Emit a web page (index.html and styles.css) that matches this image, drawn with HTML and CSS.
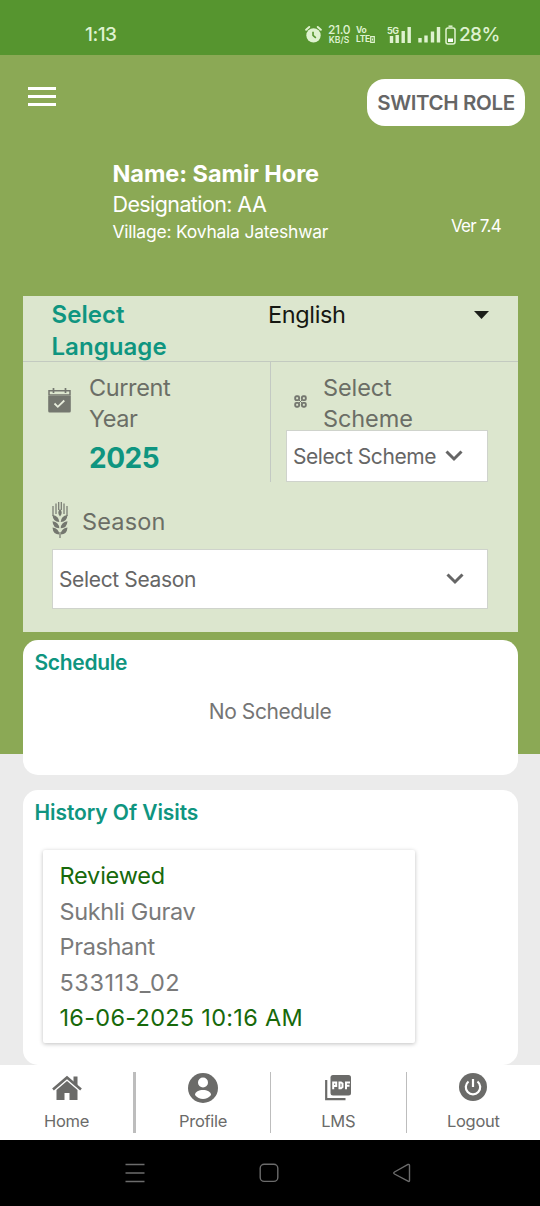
FILE: index.html
```html
<!DOCTYPE html>
<html lang="en">
<head>
<meta charset="utf-8">
<title>Dashboard</title>
<link rel="stylesheet" href="styles.css">
</head>
<body>
<div class="screen">
  <div class="status">
    <span class="clock">1:13</span>
    <div class="status-icons">
      <svg class="alarm" width="17" height="19" viewBox="0 0 18 19"><circle cx="9" cy="10.5" r="7.6" fill="#dff2d0"/><path d="M1.200 4.500 4.500 1.500M16.800 4.500 13.500 1.500" stroke="#dff2d0" stroke-width="2" stroke-linecap="round"/><path d="M8.500 6.500V10.500L11.500 13" stroke="#56952f" stroke-width="1.700" fill="none"/></svg>
      <div class="speed"><span class="rate">21.0</span><span class="unit">KB/S</span></div>
      <div class="volte"><span>Vo</span><span>LTE<svg width="5" height="7" viewBox="0 0 5 7"><path d="M.7.700H4.300V6.300H.7ZM2.500 2.500V4.500" stroke="#dff2d0" stroke-width="1.200" fill="none"/></svg></span></div>
      <svg class="signal5" width="25" height="18" viewBox="0 0 25 18"><text x="0" y="7.500" class="g5">5G</text><path d="M4.500 10V17M10.200 9V17M16.200 5V17M22.200 1V17" stroke="#dff2d0" stroke-width="3.400"/></svg>
      <svg class="signal" width="23" height="17" viewBox="0 0 23 17"><path d="M2 12V16.500M8 9.500V16.500M14.500 5.500V16.500M20.500 1V16.500" stroke="#dff2d0" stroke-width="3.400"/></svg>
      <svg class="battery" width="11" height="20" viewBox="0 0 11 20"><rect x="1" y="3" width="9" height="16" rx="2" fill="none" stroke="#dff2d0" stroke-width="1.500"/><path d="M3.500 1.200H7.500" stroke="#dff2d0" stroke-width="1.500"/><path d="M3 13.500H8V17H3Z" fill="#fff"/></svg>
      <span class="percent">28%</span>
    </div>
  </div>

  <main class="main">
    <header class="top">
      <svg class="menu" width="28" height="20" viewBox="0 0 28 20"><path d="M0 1.500H28M0 9.500H28M0 17.500H28" stroke="#fff" stroke-width="3"/></svg>
      <button class="switch"><span>SWITCH ROLE</span></button>
    </header>
    <section class="identity">
      <div class="who">
        <div class="name"><span>Name: Samir Hore</span></div>
        <div class="designation"><span>Designation: AA</span></div>
        <div class="village"><span>Village: Kovhala Jateshwar</span></div>
      </div>
      <div class="version"><span>Ver 7.4</span></div>
    </section>

    <section class="filters">
      <div class="language">
        <div class="language-label">Select<br>Language</div>
        <div class="language-value">English</div>
        <svg class="caret" width="15" height="8" viewBox="0 0 15 8"><path d="M0 0H15L7.500 8Z" fill="#1c1f1a"/></svg>
      </div>
      <div class="pair">
        <div class="year">
          <svg class="calendar" width="23" height="25" viewBox="0 0 23 25"><path d="M1 2.800H22V7H1Z" fill="#dce6ce" stroke="#74776f" stroke-width="1.500"/><path d="M.2 8H22.800V23Q22.800 24.500 21.300 24.500H1.700Q.2 24.500.2 23Z" fill="#74776f"/><path d="M5.500 0V5M17.500 0V5" stroke="#74776f" stroke-width="1.700"/><path d="M6.500 15.500 9.800 18.800 16.300 12.500" fill="none" stroke="#e7eddc" stroke-width="1.800"/></svg>
          <div class="year-text"><div class="label">Current<br>Year</div><div class="year-value">2025</div></div>
        </div>
        <div class="scheme">
          <div class="scheme-head">
            <svg class="dots" width="13" height="13" viewBox="0 0 13 13"><g fill="none" stroke="#74776f" stroke-width="1.900"><rect x="1.200" y="1.200" width="3.900" height="3.900" rx="1.200"/><rect x="7.900" y="1.200" width="3.900" height="3.900" rx="1.200"/><rect x="1.200" y="7.900" width="3.900" height="3.900" rx="1.200"/><rect x="7.900" y="7.900" width="3.900" height="3.900" rx="1.200"/></g><path d="M5 5 8 8M8 5 5 8" stroke="#74776f"/></svg>
            <div class="label scheme-label">Select<br>Scheme</div>
          </div>
          <div class="select select-scheme"><span>Select Scheme</span><svg width="18" height="12" viewBox="0 0 18 12"><path d="M1.500 1.500 9 9 16.500 1.500" fill="none" stroke="#666" stroke-width="3"/></svg></div>
        </div>
      </div>
      <div class="season-head">
        <svg class="wheat" width="16" height="36" viewBox="0 0 16 36"><g stroke="#74776f" stroke-width="1.200"><path d="M1 4V14M4 1.500V12M6.700 0V8M9.300 0V8M12 1.500V12M15 4V14M8 30V36"/></g><g fill="#74776f"><path d="M8 7Q11.500 10.500 8 14.500 4.500 10.500 8 7Z"/><path id="leaf" d="M.5 13Q7 14 7.300 20 1 20 .5 13ZM15.500 13Q9 14 8.700 20 15 20 15.500 13Z"/><use href="#leaf" y="6.300"/><use href="#leaf" y="12.600"/></g></svg>
        <span class="label">Season</span>
      </div>
      <div class="select select-season"><span>Select Season</span><svg width="18" height="12" viewBox="0 0 18 12"><path d="M1.500 1.500 9 9 16.500 1.500" fill="none" stroke="#666" stroke-width="3"/></svg></div>
    </section>

    <section class="card schedule">
      <h2><span>Schedule</span></h2>
      <p class="empty"><span>No Schedule</span></p>
    </section>

    <section class="card history">
      <h2 class="history-title"><span>History Of Visits</span></h2>
      <div class="visit">
        <div class="green reviewed">Reviewed</div>
        <div class="place">Sukhli Gurav</div>
        <div class="person">Prashant</div>
        <div class="code">533113_02</div>
        <div class="green date">16-06-2025 10:16 AM</div>
      </div>
    </section>
  </main>

  <nav class="tabs">
    <div class="tab">
      <svg width="30" height="30" viewBox="0 0 30 30"><path d="M1 16.500 15 4.500 29 16.500" fill="none" stroke="#6b6b69" stroke-width="2.600"/><path d="M21.500 3.500H25.500V13L21.500 9.500Z" fill="#6b6b69"/><path d="M4.500 17 15 8 25.500 17V27H17.500V20H12.500V27H4.500Z" fill="#6b6b69"/></svg>
      <span>Home</span>
    </div>
    <div class="tab">
      <svg width="30" height="30" viewBox="0 0 30 30"><circle cx="15" cy="15" r="15" fill="#6b6b69"/><circle cx="15" cy="9.500" r="5" fill="#fff"/><path d="M7 22C7 18.500 11 17 15 17S23 18.500 23 22C21 24.500 18 26 15 26S9 24.500 7 22Z" fill="#fff"/></svg>
      <span>Profile</span>
    </div>
    <div class="tab">
      <svg width="26" height="26" viewBox="0 0 26 26"><rect x="5.500" y="0" width="20.500" height="20.500" rx="2.500" fill="#6b6b69"/><path d="M1.200 5V24.200H20.500" stroke="#6b6b69" stroke-width="2.200" fill="none"/><path d="M8.200 14.200V7.500H11.200V11H8.200M14.500 7.500V13.200H16L17.500 12V8.500L16 7.500ZM21 14.200V7.500H25M21 10.800H24.500" stroke="#fff" stroke-width="2" fill="none"/></svg>
      <span>LMS</span>
    </div>
    <div class="tab">
      <svg width="28" height="28" viewBox="0 0 28 28"><circle cx="14" cy="14" r="14" fill="#6b6b69"/><path d="M14 6V14M9.500 8.500A7.200 7.200 0 1 0 18.500 8.500" stroke="#fff" stroke-width="2.200" fill="none"/></svg>
      <span>Logout</span>
    </div>
  </nav>

  <div class="system">
    <svg width="20" height="20" viewBox="0 0 20 20"><path d="M.5 1.500H19.500M.5 10H19.500M.5 18.500H19.500" stroke="#6c6c6c" stroke-width="1.400"/></svg>
    <svg width="20" height="20" viewBox="0 0 20 20"><rect x="1.200" y="1.200" width="17.600" height="17.200" rx="4" fill="none" stroke="#6c6c6c" stroke-width="1.400"/></svg>
    <svg width="20" height="20" viewBox="0 0 20 20"><path d="M16 1.500Q17.500 1 17.500 2.500V17.500Q17.500 19 16 18.200L2.500 11Q1 10 2.500 9Z" fill="none" stroke="#6c6c6c" stroke-width="1.400"/></svg>
  </div>
</div>
</body>
</html>
```
FILE: styles.css
```css
* { box-sizing: border-box; }
body { margin: 0; font-family: Inter, "Liberation Sans", sans-serif; }
h2, p { margin: 0; }
svg { display: block; flex: none; }
.screen { width: 540px; height: 1206px; display: flex; flex-direction: column; overflow: hidden; white-space: nowrap; }

.status { height: 55px; flex: none; background: #56952f; color: #dff2d0; display: flex; justify-content: space-between; align-items: center; padding: 14px 42px 0 85px; }
.clock { font-size: 19px; letter-spacing: -.5px; font-weight: 500; }
.status-icons { display: flex; align-items: center; height: 24px; }
.speed { display: flex; flex-direction: column; align-items: center; width: 24px; margin-left: 5px; font-weight: 500; }
.rate { font-size: 12px; line-height: 12px; letter-spacing: -.3px; }
.unit { font-size: 8.500px; line-height: 9px; font-weight: 600; }
.volte { display: flex; flex-direction: column; margin-left: 5px; width: 20px; font-size: 8.500px; line-height: 9px; font-weight: 700; letter-spacing: -.4px; }
.volte span { display: flex; align-items: center; }
.signal5 { margin-left: 11px; }
.g5 { font: 700 9px Inter, sans-serif; fill: #dff2d0; letter-spacing: -.5px; }
.signal { margin-left: 6px; }
.battery { margin-left: 4px; }
.percent { font-size: 19px; margin-left: 3px; width: 39px; letter-spacing: -.6px; font-weight: 500; }

.main { height: 1010px; flex: none; padding: 0 22.500px; background: linear-gradient(#8ba955 0 699px, #ebebeb 699px); }
.top { height: 105px; display: flex; justify-content: space-between; padding: 24px 0 0 5.500px; margin-right: -7.500px; }
.menu { margin-top: 8px; }
.switch { width: 158px; height: 47px; padding: 0; border: 0; border-radius: 18px; background: #fff; color: #666; font: 600 20.500px Inter, sans-serif; letter-spacing: -.35px; }
.identity { height: 136px; display: flex; justify-content: space-between; padding: 0 16.500px 0 90px; color: #fff; }
.name { font-size: 23.500px; font-weight: 700; line-height: 28px; letter-spacing: -.05px; }
.designation { font-size: 21.500px; line-height: 33px; letter-spacing: -.6px; }
.village { font-size: 17.500px; line-height: 21px; letter-spacing: -.23px; }
.version { font-size: 17px; line-height: 20px; padding-top: 56px; letter-spacing: -.75px; }

.filters { height: 336px; background: #dce6ce; color: #6b6e66; }
.language { height: 66px; border-bottom: 1px solid #c3cac0; display: flex; padding: 3px 28.500px 0 29px; line-height: 32px; font-size: 23.500px; }
.language-label { width: 216.500px; color: #0f9580; font-weight: 600; font-size: 24px; letter-spacing: .05px; }
.language-value { flex: 1; color: #151712; letter-spacing: -.35px; }
.caret { margin-top: 12px; }
.pair { height: 136px; display: flex; }
.label { font-size: 23.500px; line-height: 31.500px; letter-spacing: -.4px; }
.year { width: 248px; height: 120px; border-right: 1px solid #c3c9c3; display: flex; padding-left: 25.500px; }
.calendar { margin: 26px 18px 0 0; }
.year-text { padding-top: 9.500px; }
.year-value { color: #0f9580; font-weight: 700; font-size: 28px; line-height: 46px; letter-spacing: -.5px; }
.scheme { padding-left: 15.500px; }
.scheme-head { display: flex; height: 68px; padding: 9.500px 0 0 8px; }
.scheme-label { letter-spacing: -.1px; }
.dots { margin: 23px 16px 0 0; }
.select { background: #fff; border: 1px solid #cfd3cc; color: #666; font-size: 21px; display: flex; align-items: center; letter-spacing: -.35px; }
.select-scheme { width: 202px; height: 52px; padding-left: 6px; letter-spacing: -.43px; }
.select-scheme svg { margin-left: 9px; }
.season-head { display: flex; align-items: center; height: 46px; padding-left: 29.500px; margin-bottom: 5px; }
.wheat { margin-top: -2px; }
.season-head .label { margin: 2px 0 0 14px; letter-spacing: .15px; }
.select-season { width: 436px; height: 60px; margin-left: 29.500px; padding: 0 23.500px 0 6px; justify-content: space-between; }

.card { background: #fff; border-radius: 15px; }
.card h2 { color: #0f9580; font-size: 21px; font-weight: 600; line-height: 27px; letter-spacing: -.3px; }
.card .history-title { letter-spacing: -.08px; }
.schedule { height: 135px; margin-top: 8px; padding: 9px 12px; }
.empty { margin-top: 23px; text-align: center; color: #757575; font-size: 21px; line-height: 26px; letter-spacing: -.42px; }
.history { height: 275px; margin-top: 15px; padding: 9px 12px; }
.visit { width: 372px; height: 193px; margin: 24px 0 0 8px; padding: 8px 17px; border-radius: 2px; box-shadow: 0 1px 4px rgba(0,0,0,.25); color: #7a7a7a; font-size: 23.500px; line-height: 35.500px; letter-spacing: -.2px; }
.place, .person { letter-spacing: -.35px; }
.visit .code { letter-spacing: .55px; }
.visit .date { letter-spacing: .28px; }
.green { color: #17690b; }

.tabs { height: 75px; flex: none; display: grid; grid-template-columns: 136px 135px 135.500px 133.500px; background: #fff; }
.tab { height: 61px; margin-top: 7px; padding-bottom: 1px; display: flex; flex-direction: column; align-items: center; justify-content: space-between; color: #6b6b69; font-size: 16.500px; line-height: 21px; letter-spacing: -.3px; border-right: 1px solid #bdbdbd; }
.tab:first-child { border-right-width: 3px; }
.tab:last-child { border: 0; }
.tab svg { margin-top: 1px; }
.tab:nth-child(3) svg { margin-top: 3px; }

.system { height: 66px; flex: none; background: #000; display: flex; justify-content: space-between; align-items: center; padding: 0 128px 0 125px; }
```
